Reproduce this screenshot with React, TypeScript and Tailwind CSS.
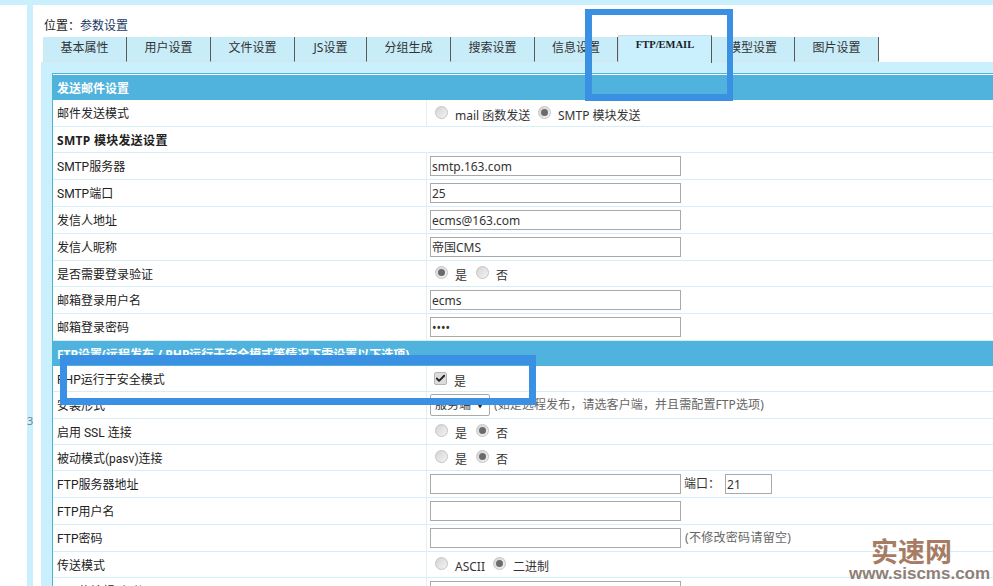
import React from 'react';
import { Check } from 'lucide-react';

const tabs = [
  { label: '基本属性', w: 'w-[84px]' },
  { label: '用户设置', w: 'w-[84px]' },
  { label: '文件设置', w: 'w-[84px]' },
  { label: 'JS设置', w: 'w-[72px]' },
  { label: '分组生成', w: 'w-[84px]' },
  { label: '搜索设置', w: 'w-[84px]' },
  { label: '信息设置', w: 'w-[83px]' },
  { label: 'FTP/EMAIL', w: 'w-[94px]', active: true },
  { label: '模型设置', w: 'w-[83px]' },
  { label: '图片设置', w: 'w-[84px]' },
];

const Radio = ({ on }: { on?: boolean }) => (
  <span className="w-[13px] h-[13px] -mt-[2px] rounded-full border border-[#c4c4c4] bg-gradient-to-br from-[#d4d4d4] to-[#f4f4f4] flex items-center justify-center shrink-0">
    {on && <span className="w-[7px] h-[7px] rounded-full bg-[#6b6b6b]" />}
  </span>
);

const TextInput = ({ value = '', w = 'w-[251px]' }: { value?: string; w?: string }) => (
  <input
    readOnly
    value={value}
    className={`${w} h-[20px] border border-[#aaaaaa] bg-white px-[1px] text-[12px] text-[#333] outline-none`}
  />
);

const Row = ({ label, h, children }: { label: React.ReactNode; h: string; children?: React.ReactNode }) => (
  <div className={`flex ${h} border-b border-[#d6eef7]`}>
    <div className="w-[374px] shrink-0 pl-[4px] pt-[2px] flex items-center border-r border-[#e2f1f7] text-[#222] font-['Roboto','Noto_Sans_CJK_SC',sans-serif]">{label}</div>
    <div className="flex-1 pl-[3px] flex items-center text-[#333]">{children}</div>
  </div>
);

const Header = ({ children }: { children: React.ReactNode }) => (
  <div className="h-[25px] bg-[#4fb3dd] pl-[4px] pt-[2px] flex items-center font-bold text-white">{children}</div>
);

const RadioText = ({ children, on, w }: { children: React.ReactNode; on?: boolean; w: string }) => (
  <>
    <Radio on={on} />
    <span className={`${w} pl-[7px] mt-[5px] shrink-0`}>{children}</span>
  </>
);

export default function App() {
  return (
    <div className="relative w-[993px] h-[586px] overflow-hidden bg-white flex flex-col text-[12px] font-['Noto_Sans','Noto_Sans_CJK_SC',sans-serif]">
      <div className="h-[5px] bg-[#c9f0fc] shrink-0" />
      <div className="flex flex-1 min-h-0">
        <div className="w-[27px] shrink-0" />
        <div className="w-[6px] shrink-0 bg-[#c9f0fc] pt-[408px] text-center text-[11px] leading-[16px] text-[#6d8794]">3</div>
        <main className="flex-1 min-w-0 pl-[8px] flex flex-col">
          <div className="h-[32px] shrink-0 pl-[3px] pt-[13px] leading-[16px] text-[#222]">
            位置：<span className="text-[#1c3a63]">参数设置</span>
          </div>

          <div className="flex items-end h-[25px] shrink-0 pl-[2px]">
            {tabs.map((t) =>
              t.active ? (
                <div
                  key={t.label}
                  className={`${t.w} h-[28px] -mb-[1px] relative bg-[#c9f0fc] border-t border-l border-[#cfdde2] border-r-[#555] border-r text-center pt-[1px] text-[10.5px] leading-[16px] font-bold text-[#1a1a2a] font-['Liberation_Serif',serif]`}
                >
                  {t.label}
                </div>
              ) : (
                <div
                  key={t.label}
                  className={`${t.w} h-[25px] pb-[2px] bg-[#c9ecf9] border-r border-[#5a5a5a] border-b border-b-[#d5e4ea] flex items-center justify-center text-[#333]`}
                >
                  {t.label}
                </div>
              ),
            )}
          </div>

          <div className="flex-1 min-h-0 bg-[#c9f0fc] pl-[11px] pt-[11px]">
            <div className="bg-white border-l border-t border-[#4fb8cf] pt-[1px] h-full">
              <Header>发送邮件设置</Header>
              <Row label="邮件发送模式" h="h-[27px]">
                <span className="w-[5px]" />
                <RadioText w="w-[90px]">mail 函数发送</RadioText>
                <RadioText on w="w-[100px]">SMTP 模块发送</RadioText>
              </Row>
              <div className="h-[26px] pl-[4px] pt-[2px] flex items-center font-bold tracking-[0.3px] text-[#222] border-b border-[#d6eef7]">SMTP 模块发送设置</div>
              <Row label="SMTP服务器" h="h-[27px]"><TextInput value="smtp.163.com" /></Row>
              <Row label="SMTP端口" h="h-[27px]"><TextInput value="25" /></Row>
              <Row label="发信人地址" h="h-[27px]"><TextInput value="ecms@163.com" /></Row>
              <Row label="发信人昵称" h="h-[27px]"><TextInput value="帝国CMS" /></Row>
              <Row label="是否需要登录验证" h="h-[26px]">
                <span className="w-[5px]" />
                <RadioText on w="w-[28px]">是</RadioText>
                <RadioText w="w-[28px]">否</RadioText>
              </Row>
              <Row label="邮箱登录用户名" h="h-[27px]"><TextInput value="ecms" /></Row>
              <Row label="邮箱登录密码" h="h-[27px]"><TextInput value="••••" /></Row>
              <Header>FTP设置(远程发布 / PHP运行于安全模式等情况下需设置以下选项)</Header>
              <Row label="PHP运行于安全模式" h="h-[26px]">
                <span className="w-[4px]" />
                <span className="w-[13px] h-[13px] rounded-[2px] border border-[#b5b5b5] bg-[#dcdcdc] flex items-center justify-center shrink-0">
                  <Check size={11} strokeWidth={4} className="text-[#222]" />
                </span>
                <span className="pl-[7px] mt-[6px]">是</span>
              </Row>
              <Row label="安装形式" h="h-[27px]">
                <span className="w-[60px] h-[22px] border border-[#aaaaaa] rounded-[2px] flex items-center justify-between pl-[4px] pr-[5px] shrink-0">
                  服务端<span className="text-[8px] text-[#222]">▼</span>
                </span>
                <span className="pl-[4px] tracking-[0.1px] text-[#666]">(如是远程发布，请选客户端，并且需配置FTP选项)</span>
              </Row>
              <Row label="启用 SSL 连接" h="h-[26px]">
                <span className="w-[5px]" />
                <RadioText w="w-[28px]">是</RadioText>
                <RadioText on w="w-[28px]">否</RadioText>
              </Row>
              <Row label="被动模式(pasv)连接" h="h-[26px]">
                <span className="w-[5px]" />
                <RadioText w="w-[28px]">是</RadioText>
                <RadioText on w="w-[28px]">否</RadioText>
              </Row>
              <Row label="FTP服务器地址" h="h-[27px]">
                <TextInput />
                <span className="pl-[3px] pr-[5px]">端口：</span>
                <TextInput value="21" w="w-[47px]" />
              </Row>
              <Row label="FTP用户名" h="h-[27px]"><TextInput /></Row>
              <Row label="FTP密码" h="h-[27px]">
                <TextInput />
                <span className="pl-[4px] tracking-[0.3px] text-[#666]">(不修改密码请留空)</span>
              </Row>
              <Row label="传送模式" h="h-[26px]">
                <span className="w-[5px]" />
                <RadioText w="w-[45px]">ASCII</RadioText>
                <RadioText on w="w-[60px]">二进制</RadioText>
              </Row>
              <Row label="FTP传输超时时间" h="h-[27px]"><TextInput /></Row>
            </div>
          </div>
        </main>
      </div>

      {/* annotation boxes drawn over the screenshot */}
      <div className="absolute left-[585px] top-[9px] w-[148px] h-[92px] border-[6px] border-l-[7px] border-b-[7px] border-[#3a90e2] pointer-events-none" />
      <div className="absolute left-[60px] top-[355px] w-[476px] h-[50px] border-[7px] border-t-[10px] border-[#3a90e2] pointer-events-none" />

      {/* watermark */}
      <div className="absolute left-[849px] top-[537px] flex flex-col gap-[1px] pointer-events-none">
        <div className="pl-[22px] text-[27px] leading-[28px] font-bold text-[#a67c64] font-['Noto_Sans_CJK_SC',sans-serif]">实速网</div>
        <div className="text-[17px] leading-[16px] font-bold whitespace-nowrap text-[#8f7f76] font-['Liberation_Sans',sans-serif]">www.siscms.com</div>
      </div>
    </div>
  );
}
